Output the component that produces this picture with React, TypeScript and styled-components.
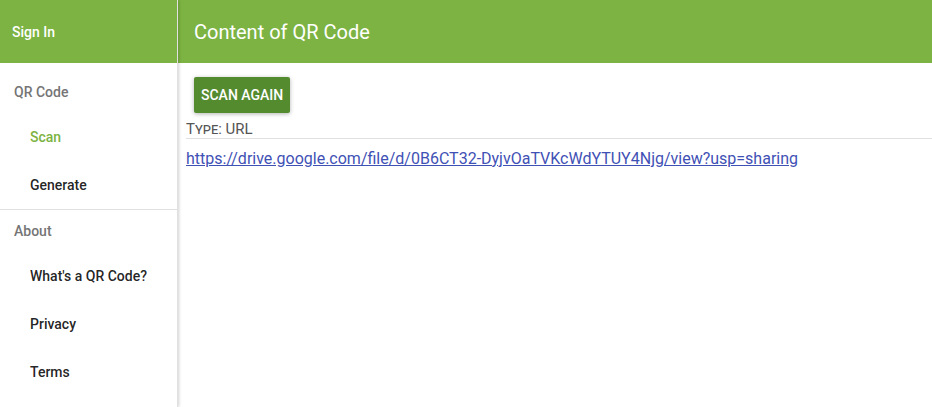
import React from "react";
import styled, { createGlobalStyle } from "styled-components";

const Global = createGlobalStyle`
  html, body { margin: 0; padding: 0; background: #fff; }
  body { font-family: Roboto, "Noto Sans", Arial, sans-serif; -webkit-font-smoothing: antialiased; }
  * { box-sizing: border-box; }
`;

const Shell = styled.div`
  display: grid;
  grid-template-columns: 178px 1fr;
  height: 407px;
  overflow: hidden;
`;

const Sidebar = styled.aside`
  position: relative;
  z-index: 2;
  background: #fff;
  border-right: 1px solid #e0e0e0;
  box-shadow: 1px 0 3px rgba(0, 0, 0, 0.18);
  display: flex;
  flex-direction: column;
`;

const SideHeader = styled.div`
  height: 63px;
  background: #7cb342;
  color: #fff;
  font-size: 14px;
  font-weight: 500;
  display: flex;
  align-items: center;
  padding-left: 12px;
`;

const Section = styled.div<{ $top: number }>`
  padding-top: ${(p) => p.$top}px;
  display: flex;
  flex-direction: column;
`;

const SubHeader = styled.div`
  height: 42px;
  line-height: 42px;
  padding-left: 14px;
  font-size: 14px;
  font-weight: 500;
  color: #757575;
`;

const NavItem = styled.div<{ $active?: boolean }>`
  height: 48px;
  line-height: 48px;
  padding-left: 30px;
  font-size: 14px;
  font-weight: 500;
  color: ${(p) => (p.$active ? "#7cb342" : "rgba(0,0,0,0.87)")};
`;

const Divider = styled.hr`
  margin: 0;
  border: 0;
  border-top: 1px solid #e0e0e0;
`;

const Main = styled.main`
  display: flex;
  flex-direction: column;
`;

const TopBar = styled.header`
  height: 63px;
  background: #7cb342;
  color: #fff;
  font-size: 20px;
  font-weight: 400;
  display: flex;
  align-items: center;
  padding-left: 16px;
`;

const Content = styled.div`
  padding: 14px 0 0 8px;
  display: flex;
  flex-direction: column;
  align-items: flex-start;
`;

const Button = styled.button`
  margin-left: 8px;
  height: 36px;
  padding: 0 7px;
  border: 0;
  border-radius: 2px;
  background: #558b2f;
  color: #fff;
  font-family: inherit;
  font-size: 14px;
  font-weight: 500;
  text-transform: uppercase;
  box-shadow: 0 1px 4px rgba(0, 0, 0, 0.3);
  cursor: pointer;
`;

const TypeLine = styled.div`
  align-self: stretch;
  margin-top: 8px;
  padding-bottom: 1px;
  border-bottom: 1px solid #e0e0e0;
  font-size: 15px;
  line-height: 16px;
  color: #555;
  font-variant: small-caps;
`;

const Link = styled.a`
  margin-top: 11px;
  font-size: 16px;
  line-height: 18px;
  color: #3f51b5;
  text-decoration: underline;
`;

export default function App() {
  return (
    <>
      <Global />
      <Shell>
        <Sidebar>
          <SideHeader>Sign In</SideHeader>
          <Section $top={8}>
            <SubHeader>QR Code</SubHeader>
            <NavItem $active>Scan</NavItem>
            <NavItem>Generate</NavItem>
          </Section>
          <Divider />
          <Section $top={0}>
            <SubHeader>About</SubHeader>
            <NavItem>What's a QR Code?</NavItem>
            <NavItem>Privacy</NavItem>
            <NavItem>Terms</NavItem>
          </Section>
        </Sidebar>
        <Main>
          <TopBar>Content of QR Code</TopBar>
          <Content>
            <Button>Scan again</Button>
            <TypeLine>Type: URL</TypeLine>
            <Link href="#">
              https://drive.google.com/file/d/0B6CT32-DyjvOaTVKcWdYTUY4Njg/view?usp=sharing
            </Link>
          </Content>
        </Main>
      </Shell>
    </>
  );
}
